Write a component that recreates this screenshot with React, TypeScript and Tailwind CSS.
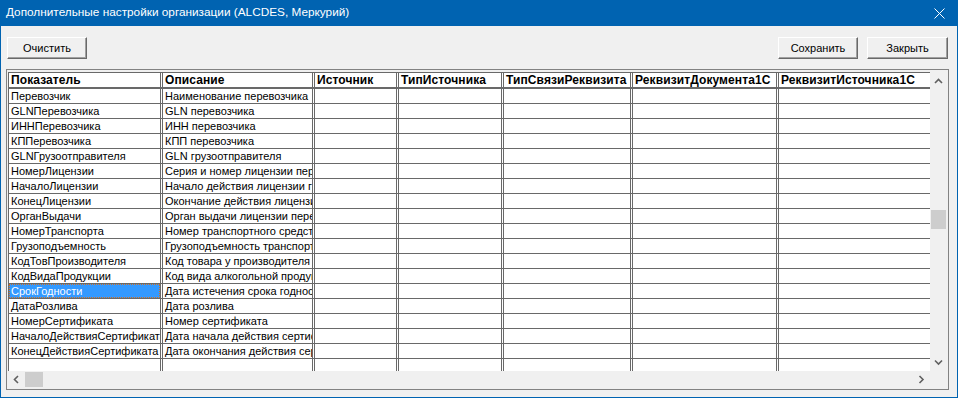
import React from 'react';

// Column widths include the left border of each column
const columns = [
  { title: 'Показатель', w: 152 },
  { title: 'Описание', w: 152 },
  { title: 'Источник', w: 84 },
  { title: 'ТипИсточника', w: 105 },
  { title: 'ТипСвязиРеквизита', w: 129 },
  { title: 'РеквизитДокумента1С', w: 146 },
  { title: 'РеквизитИсточника1С', w: 160 },
];

const rows: [string, string][] = [
  ['Перевозчик', 'Наименование перевозчика'],
  ['GLNПеревозчика', 'GLN перевозчика'],
  ['ИННПеревозчика', 'ИНН перевозчика'],
  ['КППеревозчика', 'КПП перевозчика'],
  ['GLNГрузоотправителя', 'GLN грузоотправителя'],
  ['НомерЛицензии', 'Серия и номер лицензии перевозчика'],
  ['НачалоЛицензии', 'Начало действия лицензии грузоперевозчика'],
  ['КонецЛицензии', 'Окончание действия лицензии'],
  ['ОрганВыдачи', 'Орган выдачи лицензии перевозчика'],
  ['НомерТранспорта', 'Номер транспортного средства'],
  ['Грузоподъемность', 'Грузоподъемность транспортного средства'],
  ['КодТовПроизводителя', 'Код товара у производителя'],
  ['КодВидаПродукции', 'Код вида алкогольной продукции'],
  ['СрокГодности', 'Дата истечения срока годности'],
  ['ДатаРозлива', 'Дата розлива'],
  ['НомерСертификата', 'Номер сертификата'],
  ['НачалоДействияСертификата', 'Дата начала действия сертификата'],
  ['КонецДействияСертификата', 'Дата окончания действия сертификата'],
  ['', ''],
];

const SELECTED = 13;

const Chevron: React.FC<{ dir: 'up' | 'down' | 'left' | 'right' }> = ({ dir }) => {
  const pts = {
    up: '1,5 4.5,1.5 8,5',
    down: '1,1.5 4.5,5 8,1.5',
    left: '5,1 1.5,4.5 5,8',
    right: '1.5,1 5,4.5 1.5,8',
  }[dir];
  const vertical = dir === 'up' || dir === 'down';
  return (
    <svg width={vertical ? 9 : 7} height={vertical ? 7 : 9} viewBox={vertical ? '0 0 9 7' : '0 0 7 9'}>
      <polyline points={pts} fill="none" stroke="#606060" strokeWidth="1.6" />
    </svg>
  );
};

const WinButton: React.FC<{ children: React.ReactNode; className?: string }> = ({ children, className }) => (
  <div
    className={`h-[22px] w-[80px] flex items-center justify-center bg-[#f0f0f0] border border-t-white border-l-white border-r-[#696969] border-b-[#696969] shadow-[inset_-1px_-1px_0_#a0a0a0] text-[11px] text-black ${className ?? ''}`}
  >
    {children}
  </div>
);

export default function App() {
  return (
    <div
      className="w-[958px] h-[398px] bg-[#f0f0f0] flex flex-col border-x border-b border-[#0063b1] overflow-hidden"
      style={{ fontFamily: '"Liberation Sans", Arial, sans-serif' }}
    >
      {/* Title bar */}
      <div className="h-[26px] -mx-px bg-[#0063b1] flex items-center justify-between pl-[6px] pr-[13px] shrink-0">
        <span className="text-white text-[11.8px]">Дополнительные настройки организации (ALCDES, Меркурий)</span>
        <svg width="11" height="11" viewBox="0 0 11 11">
          <path d="M0.5 0.5 L10.5 10.5 M10.5 0.5 L0.5 10.5" stroke="#ffffff" strokeWidth="1" />
        </svg>
      </div>

      {/* Toolbar */}
      <div className="flex items-center pl-[6px] pr-[9px] pt-[11px] shrink-0">
        <WinButton>Очистить</WinButton>
        <div className="flex-1" />
        <WinButton>Сохранить</WinButton>
        <WinButton className="ml-[9px] w-[81px]">Закрыть</WinButton>
      </div>

      {/* Grid frame */}
      <div className="mt-[10px] ml-[5px] mr-[8px] h-[321px] border border-[#828282] p-px flex flex-col">
        <div className="flex flex-1 min-h-0 border-t border-[#f0f0f0]">
          <div className="w-[922px] bg-white overflow-hidden">
            {/* header */}
            <div className="flex h-[17px] border-t border-b-2 border-[#696969] font-bold text-[12px] leading-[14px] tracking-[0.1px] text-black whitespace-nowrap">
              {columns.map((c, i) => (
                <div
                  key={c.title}
                  style={{ width: c.w }}
                  className={`shrink-0 overflow-hidden pl-[2px] border-[#696969] ${i === 0 ? 'border-l' : 'border-l-[3px] border-double'}`}
                >
                  {c.title}
                </div>
              ))}
            </div>
            {rows.map((r, ri) => (
              <div key={ri} className="flex h-[15px] border-b border-[#696969] text-[11px] leading-[14px] text-black whitespace-nowrap">
                {columns.map((c, i) => {
                  const text = i === 0 ? r[0] : i === 1 ? r[1] : '';
                  const sel = ri === SELECTED && i === 0;
                  return (
                    <div
                      key={i}
                      style={{ width: c.w }}
                      className={`shrink-0 overflow-hidden border-[#696969] ${i === 0 ? 'border-l' : 'border-l-[3px] border-double'}`}
                    >
                      {sel ? (
                        <div className="h-full bg-[#3399ff] text-white pl-px border border-dotted border-[#d07020] leading-[12px]">
                          {text}
                        </div>
                      ) : (
                        <div className="pl-[2px]">{text}</div>
                      )}
                    </div>
                  );
                })}
              </div>
            ))}
          </div>
          {/* vertical scrollbar */}
          <div className="w-[17px] shrink-0 bg-[#f0f0f0] flex flex-col items-center">
            <div className="h-[17px] flex items-center justify-center mt-[1px]">
              <Chevron dir="up" />
            </div>
            <div className="h-[120px]" />
            <div className="w-[15px] h-[19px] bg-[#cdcdcd]" />
            <div className="flex-1" />
            <div className="h-[17px] flex items-center justify-center">
              <Chevron dir="down" />
            </div>
          </div>
        </div>
        {/* horizontal scrollbar */}
        <div className="h-[17px] shrink-0 flex bg-[#f0f0f0]">
          <div className="w-[17px] flex items-center justify-center">
            <Chevron dir="left" />
          </div>
          <div className="w-[18px] h-[15px] mt-px bg-[#cdcdcd]" />
          <div className="flex-1" />
          <div className="w-[17px] flex items-center justify-center">
            <Chevron dir="right" />
          </div>
          <div className="w-[17px]" />
        </div>
      </div>
    </div>
  );
}
